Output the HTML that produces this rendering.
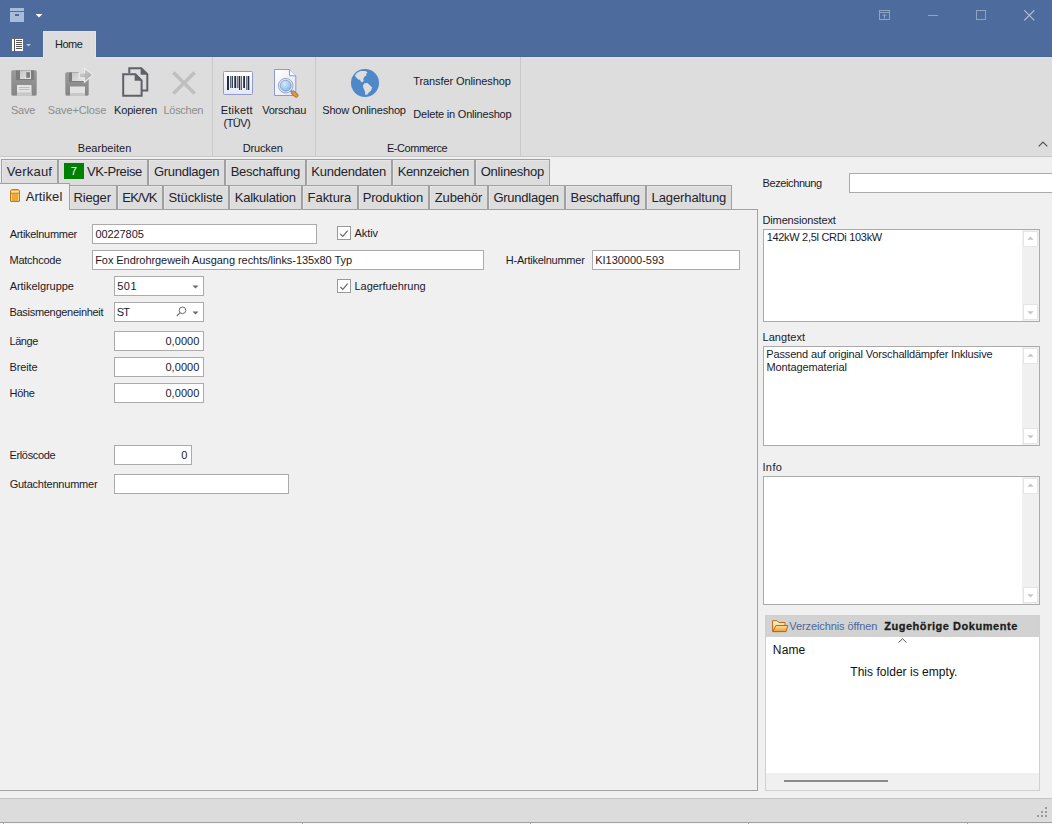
<!DOCTYPE html>
<html>
<head>
<meta charset="utf-8">
<title>Artikel</title>
<style>
*{box-sizing:border-box;margin:0;padding:0}
html,body{width:1052px;height:824px;overflow:hidden;background:#f0f0f0}
body{font-family:"Liberation Sans",sans-serif;font-size:11px;color:#1a1a2a;position:relative}
.abs{position:absolute}
.t{position:absolute;white-space:nowrap}
#title{left:0;top:0;width:1052px;height:57px;background:#4d6b9d;border-bottom:1px solid #47659a}
#hometab{left:43px;top:31px;width:53px;height:27px;background:#dddddd;border:1px solid #e4e4e2;border-bottom:none}
#ribbon{left:0;top:57px;width:1052px;height:99px;background:#dddddd;border-top:1px solid #e4e4e2}
#ribline{left:0;top:156px;width:1052px;height:1px;background:#c8c8c8}
.rsep{position:absolute;top:57px;width:1px;height:99px;background:#c9c9c9}
.tab{position:absolute;background:#dddddd;border:1px solid #a0a0a0;box-shadow:inset 1px 1px 0 #e6e6e6}
.r1{top:159px;height:26px;border-bottom:none}
.r2{top:185px;height:25px}
.in{position:absolute;background:#fff;border:1px solid #ababab;height:20px}
.cb{position:absolute;width:14px;height:14px;background:#fff;border:1px solid #a6a6a6}
.ta{position:absolute;background:#fff;border:1px solid #ababab}
.sb{position:absolute;top:0;right:0;bottom:0;width:17px;background:#f0f0f0}
.sbtn{position:absolute;left:1px;width:15px;height:16px;background:#fff;border:1px solid #e5e5e5}
</style>
</head>
<body>
<div id="title" class="abs"></div>
<div id="ribbon" class="abs"></div>
<div id="hometab" class="abs"></div>
<div id="ribline" class="abs"></div>
<svg class="abs" style="left:10px;top:8px" width="14" height="14" viewBox="0 0 14 14"><rect x="0" y="0" width="14" height="3" fill="#a8bbdc"/><rect x="0" y="4" width="14" height="10" fill="#a8bbdc"/><rect x="5" y="6" width="4" height="2" fill="#4d6b9d"/></svg>
<svg class="abs" style="left:35px;top:13px" width="8" height="5" viewBox="0 0 8 5"><path d="M0.6 1h6.8L4 4.4z" fill="#ffffff"/></svg>
<svg class="abs" style="left:11px;top:38px" width="14" height="14" viewBox="0 0 14 14"><rect x="0.5" y="0.5" width="12" height="13" fill="#fff" stroke="#6b6b6b" stroke-width="1"/><path d="M3.5 0.5v13" stroke="#555" stroke-width="1"/><path d="M5 2.5h6M5 4.5h6M5 6.5h6M5 8.5h6M5 10.5h6" stroke="#555" stroke-width="1"/></svg>
<svg class="abs" style="left:26px;top:44px" width="5" height="3" viewBox="0 0 5 3"><path d="M0 0h5L2.5 2.6z" fill="#b9c3d6"/></svg>
<div class="t" style="left:54.99px;top:38px;font-size:11px;line-height:13px;height:13px;color:#1a1a2a;letter-spacing:-0.498px;">Home</div><svg class="abs" style="left:879px;top:10px" width="11" height="10" viewBox="0 0 11 10"><rect x="0.5" y="0.5" width="10" height="9" fill="none" stroke="#8fa3c4"/><path d="M0 2.5h11" stroke="#8fa3c4"/><path d="M5.5 8.5v-4M3.5 6l2-2 2 2" stroke="#8fa3c4" fill="none"/></svg>
<div class="abs" style="left:928px;top:15px;width:10px;height:1px;background:#8fa3c4"></div>
<div class="abs" style="left:976px;top:10px;width:10px;height:10px;border:1px solid #8fa3c4"></div>
<svg class="abs" style="left:1024px;top:10px" width="11" height="11" viewBox="0 0 11 11"><path d="M0.3 0.3l10 10M10.3 0.3l-10 10" stroke="#b4c0d8" stroke-width="1.1"/></svg>
<div class="rsep" style="left:212px"></div>
<div class="rsep" style="left:315px"></div>
<div class="rsep" style="left:520px"></div>
<div class="t" style="left:10.93px;top:104px;font-size:11px;line-height:13px;height:13px;color:#8c8c8c;letter-spacing:-0.211px;">Save</div><div class="t" style="left:47.78px;top:104px;font-size:11px;line-height:13px;height:13px;color:#8c8c8c;letter-spacing:-0.112px;">Save+Close</div><div class="t" style="left:113.96px;top:104px;font-size:11px;line-height:13px;height:13px;color:#1a1a2a;letter-spacing:-0.136px;">Kopieren</div><div class="t" style="left:163.55px;top:104px;font-size:11px;line-height:13px;height:13px;color:#8c8c8c;letter-spacing:-0.304px;">Löschen</div><div class="t" style="left:220.74px;top:104px;font-size:11px;line-height:13px;height:13px;color:#1a1a2a;letter-spacing:0.218px;">Etikett</div><div class="t" style="left:223.55px;top:117px;font-size:11px;line-height:13px;height:13px;color:#1a1a2a;letter-spacing:-0.551px;">(TÜV)</div><div class="t" style="left:262.16px;top:104px;font-size:11px;line-height:13px;height:13px;color:#1a1a2a;letter-spacing:-0.237px;">Vorschau</div><div class="t" style="left:322.26px;top:104px;font-size:11px;line-height:13px;height:13px;color:#1a1a2a;letter-spacing:-0.178px;">Show Onlineshop</div><div class="t" style="left:413.16px;top:75px;font-size:11px;line-height:13px;height:13px;color:#1a1a2a;letter-spacing:-0.084px;">Transfer Onlineshop</div><div class="t" style="left:413.36px;top:108px;font-size:11px;line-height:13px;height:13px;color:#1a1a2a;letter-spacing:-0.203px;">Delete in Onlineshop</div><div class="t" style="left:77.80px;top:142px;font-size:11px;line-height:13px;height:13px;color:#1a1a2a;letter-spacing:0.039px;">Bearbeiten</div><div class="t" style="left:242.85px;top:142px;font-size:11px;line-height:13px;height:13px;color:#1a1a2a;letter-spacing:-0.176px;">Drucken</div><div class="t" style="left:386.95px;top:142px;font-size:11px;line-height:13px;height:13px;color:#1a1a2a;letter-spacing:-0.456px;">E-Commerce</div><svg class="abs" style="left:1038px;top:141px" width="10" height="6" viewBox="0 0 10 6"><path d="M0.7 5.3L5 1l4.3 4.3" fill="none" stroke="#505050" stroke-width="1.2"/></svg>
<svg class="abs" style="left:11px;top:70px" width="26" height="26" viewBox="0 0 26 26">
<defs><linearGradient id="fg" x1="0" y1="0" x2="0" y2="1"><stop offset="0" stop-color="#999999"/><stop offset="1" stop-color="#858585"/></linearGradient>
<linearGradient id="fl" x1="0" y1="0" x2="1" y2="1"><stop offset="0" stop-color="#c4c4c4"/><stop offset="1" stop-color="#e6e6e6"/></linearGradient></defs>
<rect x="0.5" y="0.5" width="25" height="25" rx="1.5" fill="url(#fg)" stroke="#a6a6a6"/>
<rect x="5" y="0.5" width="18" height="9.5" fill="#7c7c7c"/>
<rect x="9" y="0.5" width="11" height="8.5" fill="url(#fl)"/>
<rect x="15.3" y="2.2" width="3.6" height="5.6" fill="#7a7a7a"/>
<rect x="6" y="15" width="14.5" height="10.5" fill="#e3e3e3"/>
<rect x="6" y="22.3" width="14.5" height="3.2" fill="#c9c9c9"/>
<path d="M8 17.5h10.5M8 19.5h10.5" stroke="#bdbdbd" stroke-width="1"/>
</svg>
<svg class="abs" style="left:65px;top:67px" width="30" height="30" viewBox="0 0 30 30">
<defs><linearGradient id="ag" x1="0" y1="0" x2="1" y2="1"><stop offset="0" stop-color="#d2d2d2"/><stop offset="1" stop-color="#a2a2a2"/></linearGradient></defs>
<rect x="0.5" y="5.5" width="23" height="23" rx="1.5" fill="url(#fg)" stroke="#a6a6a6"/>
<rect x="4" y="5.5" width="17" height="9.5" fill="#7c7c7c"/>
<rect x="7" y="5.5" width="12" height="8.5" fill="url(#fl)"/>
<rect x="5" y="19.5" width="15" height="9" fill="#e3e3e3"/>
<rect x="5" y="26" width="15" height="2.5" fill="#c9c9c9"/>
<path d="M14.2 5.8h5.2V1.3L27.9 7.9l-8.5 7.4v-4.5h-5.2z" fill="url(#ag)" stroke="#ececec" stroke-width="1.2" stroke-linejoin="round"/>
</svg>
<svg class="abs" style="left:122px;top:67px" width="27" height="30" viewBox="0 0 27 30">
<path d="M7.3 6V1.2h12l6 6v16.4h-5.5" fill="none" stroke="#60606a" stroke-width="2"/>
<path d="M18.6 0.8l7 7h-7z" fill="#60606a"/>
<path d="M1.2 7.2h12.2l6.2 6.2v15.3H1.2z" fill="#dddddd" stroke="#60606a" stroke-width="2"/>
<path d="M12.7 6.6l7.1 7.1h-7.1z" fill="#60606a"/>
</svg>
<svg class="abs" style="left:171px;top:70px" width="26" height="26" viewBox="0 0 26 26"><path d="M2.4 2.4l21.2 21.2M23.6 2.4L2.4 23.6" stroke="#bfbfbf" stroke-width="3.5"/></svg>
<svg class="abs" style="left:223px;top:71px" width="30" height="24" viewBox="0 0 30 24">
<defs><linearGradient id="bg1" x1="0" y1="0" x2="0" y2="1"><stop offset="0" stop-color="#ffffff"/><stop offset="1" stop-color="#e4e8f4"/></linearGradient></defs>
<rect x="0.5" y="0.5" width="29" height="23" rx="1" fill="url(#bg1)" stroke="#8e9aca"/>
<g fill="#222c44"><rect x="4" y="5" width="2" height="14"/><rect x="7.3" y="5" width="1" height="12"/><rect x="8.9" y="5" width="1" height="12"/><rect x="11.3" y="5" width="1.9" height="12"/><rect x="14.4" y="5" width="1" height="12"/><rect x="16" y="5" width="1" height="14"/><rect x="17.7" y="5" width="1" height="14"/><rect x="20.2" y="5" width="1.8" height="12"/><rect x="23.4" y="5" width="1" height="14"/><rect x="25" y="5" width="1.3" height="14"/></g>
</svg>
<svg class="abs" style="left:274px;top:69px" width="25" height="29" viewBox="0 0 25 29">
<defs><linearGradient id="pg" x1="0" y1="0" x2="1" y2="1"><stop offset="0" stop-color="#ffffff"/><stop offset="1" stop-color="#dfe5f3"/></linearGradient>
<radialGradient id="lg" cx="0.4" cy="0.35" r="0.7"><stop offset="0" stop-color="#d3ecfb"/><stop offset="1" stop-color="#6fb3e6"/></radialGradient></defs>
<path d="M0.5 0.5h15l6.3 6.3V26.5H0.5z" fill="url(#pg)" stroke="#8e9aca"/>
<path d="M15.5 0.5v6.3h6.3" fill="#f4f6fb" stroke="#8e9aca"/>
<path d="M19.3 23.9l2.9 2.5" stroke="#a8691d" stroke-width="4.4" stroke-linecap="round"/>
<path d="M19.3 23.9l2.9 2.5" stroke="#dc9a3a" stroke-width="3" stroke-linecap="round"/>
<path d="M16.2 21.2l2.6 2.3" stroke="#8a8fa8" stroke-width="2.4"/>
<circle cx="11.7" cy="16.7" r="6.4" fill="url(#lg)" stroke="#e6e9f5" stroke-width="1.7"/>
<circle cx="11.7" cy="16.7" r="7.3" fill="none" stroke="#7a83b4" stroke-width="0.7"/>
<circle cx="11.7" cy="16.7" r="5.5" fill="none" stroke="#7a83b4" stroke-width="0.6"/>
</svg>
<svg class="abs" style="left:351px;top:69px" width="28" height="28" viewBox="0 0 28 28">
<circle cx="14" cy="14" r="14" fill="#4d89c8"/>
<path d="M3.8 6.8L6 3.7 9.5 2.1 14.3 1.9 16.6 3.2 15.2 4.7 15.6 6.3 13.5 7.6 12.3 9.8 12.7 11.8 11.5 13.3 9.7 12.6 9 10.6 7.5 10.8 6 9.3z" fill="#dddddd"/>
<path d="M13.5 14.3L16.4 14 18.9 16.2 21.2 18.5 19.9 21.7 17.9 23.6 16.4 25.6 14.3 26.1 14 22.7 12.3 18.7 12 16.2z" fill="#dddddd"/>
</svg>
<div class="abs" style="left:-1px;top:209px;width:759px;height:582px;border:1px solid #a3a3a3;background:#f0f0f0"></div>
<div class="tab r1" style="left:1px;width:57px"></div><div class="t" style="left:6.68px;top:164px;font-size:13px;line-height:15px;height:15px;color:#23232f;letter-spacing:0.197px;">Verkauf</div>
<div class="tab r1" style="left:58px;width:90px"></div><div class="t" style="left:86.97px;top:164px;font-size:13px;line-height:15px;height:15px;color:#23232f;letter-spacing:-0.403px;">VK-Preise</div>
<div class="tab r1" style="left:148px;width:77px"></div><div class="t" style="left:153.93px;top:164px;font-size:13px;line-height:15px;height:15px;color:#23232f;letter-spacing:-0.264px;">Grundlagen</div>
<div class="tab r1" style="left:225px;width:81px"></div><div class="t" style="left:230.66px;top:164px;font-size:13px;line-height:15px;height:15px;color:#23232f;letter-spacing:-0.259px;">Beschaffung</div>
<div class="tab r1" style="left:306px;width:86px"></div><div class="t" style="left:311.33px;top:164px;font-size:13px;line-height:15px;height:15px;color:#23232f;letter-spacing:-0.253px;">Kundendaten</div>
<div class="tab r1" style="left:392px;width:83px"></div><div class="t" style="left:397.63px;top:164px;font-size:13px;line-height:15px;height:15px;color:#23232f;letter-spacing:-0.361px;">Kennzeichen</div>
<div class="tab r1" style="left:475px;width:75px"></div><div class="t" style="left:480.72px;top:164px;font-size:13px;line-height:15px;height:15px;color:#23232f;letter-spacing:-0.239px;">Onlineshop</div>
<div class="abs" style="left:64px;top:163px;width:20px;height:16px;background:#008000"></div><div class="t" style="left:70.70px;top:165px;font-size:11px;line-height:13px;height:13px;color:#ffffff;">7</div>
<div class="tab r2" style="left:69px;width:48px"></div><div class="t" style="left:73.57px;top:190px;font-size:13px;line-height:15px;height:15px;color:#23232f;letter-spacing:-0.173px;">Rieger</div>
<div class="tab r2" style="left:117px;width:46px"></div><div class="t" style="left:122.36px;top:190px;font-size:13px;line-height:15px;height:15px;color:#23232f;letter-spacing:-0.800px;">EK/VK</div>
<div class="tab r2" style="left:163px;width:66px"></div><div class="t" style="left:168.49px;top:190px;font-size:13px;line-height:15px;height:15px;color:#23232f;letter-spacing:-0.122px;">Stückliste</div>
<div class="tab r2" style="left:229px;width:73px"></div><div class="t" style="left:234.76px;top:190px;font-size:13px;line-height:15px;height:15px;color:#23232f;letter-spacing:-0.234px;">Kalkulation</div>
<div class="tab r2" style="left:302px;width:56px"></div><div class="t" style="left:307.59px;top:190px;font-size:13px;line-height:15px;height:15px;color:#23232f;letter-spacing:-0.055px;">Faktura</div>
<div class="tab r2" style="left:358px;width:71px"></div><div class="t" style="left:362.70px;top:190px;font-size:13px;line-height:15px;height:15px;color:#23232f;letter-spacing:-0.192px;">Produktion</div>
<div class="tab r2" style="left:429px;width:59px"></div><div class="t" style="left:434.78px;top:190px;font-size:13px;line-height:15px;height:15px;color:#23232f;letter-spacing:-0.137px;">Zubehör</div>
<div class="tab r2" style="left:488px;width:77px"></div><div class="t" style="left:493.41px;top:190px;font-size:13px;line-height:15px;height:15px;color:#23232f;letter-spacing:-0.251px;">Grundlagen</div>
<div class="tab r2" style="left:565px;width:81px"></div><div class="t" style="left:570.52px;top:190px;font-size:13px;line-height:15px;height:15px;color:#23232f;letter-spacing:-0.247px;">Beschaffung</div>
<div class="tab r2" style="left:646px;width:86px"></div><div class="t" style="left:651.55px;top:190px;font-size:13px;line-height:15px;height:15px;color:#23232f;letter-spacing:-0.100px;">Lagerhaltung</div>
<div class="abs" style="left:-1px;top:183px;width:71px;height:27px;background:#f0f0f0;border:1px solid #a0a0a0;border-bottom:none"></div><svg class="abs" style="left:10px;top:189px" width="10" height="13" viewBox="0 0 10 13"><path d="M1.7 0.5h6.6l1.2 1.4v10.1q0 .5-.5.5H1q-.5 0-.5-.5V1.9z" fill="#eba83c" stroke="#bf781c"/><rect x="1.1" y="2.1" width="7.8" height="1.5" fill="#fff2ac"/><path d="M1 1.4h8" stroke="#eeb14a" stroke-width="1"/><path d="M0.9 4.3h8.2" stroke="#c98322" stroke-width="0.8"/><path d="M1.5 5v6.6M8.5 5v6.6" stroke="#f8d680" stroke-width="0.9"/></svg><div class="t" style="left:25.73px;top:189px;font-size:13px;line-height:15px;height:15px;color:#23232f;letter-spacing:0.072px;">Artikel</div>
<div class="in" style="left:92px;top:224px;width:225px;height:20px"></div><div class="t" style="left:9.68px;top:228px;font-size:11px;line-height:13px;height:13px;color:#1a1a2a;letter-spacing:-0.283px;">Artikelnummer</div><div class="t" style="left:95.39px;top:228px;font-size:11px;line-height:13px;height:13px;color:#1a1a2a;letter-spacing:-0.073px;">00227805</div>
<div class="in" style="left:92px;top:250px;width:392px;height:20px"></div><div class="t" style="left:9.48px;top:254px;font-size:11px;line-height:13px;height:13px;color:#1a1a2a;letter-spacing:-0.249px;">Matchcode</div><div class="t" style="left:95.19px;top:254px;font-size:11px;line-height:13px;height:13px;color:#1a1a2a;letter-spacing:-0.059px;">Fox Endrohrgeweih Ausgang rechts/links-135x80 Typ</div>
<div class="in" style="left:114px;top:276px;width:90px;height:20px"></div><div class="t" style="left:9.68px;top:280px;font-size:11px;line-height:13px;height:13px;color:#1a1a2a;letter-spacing:-0.045px;">Artikelgruppe</div><div class="t" style="left:117.34px;top:280px;font-size:11px;line-height:13px;height:13px;color:#1a1a2a;letter-spacing:0.410px;">501</div>
<div class="in" style="left:114px;top:302px;width:90px;height:20px"></div><div class="t" style="left:9.49px;top:306px;font-size:11px;line-height:13px;height:13px;color:#1a1a2a;letter-spacing:-0.293px;">Basismengeneinheit</div><div class="t" style="left:116.81px;top:306px;font-size:11px;line-height:13px;height:13px;color:#1a1a2a;letter-spacing:-0.800px;">ST</div>
<svg class="abs" style="left:192px;top:285px" width="7" height="4" viewBox="0 0 7 4"><path d="M0.5 0.5h6L3.5 3.5z" fill="#6a6a6a"/></svg><svg class="abs" style="left:192px;top:311px" width="7" height="4" viewBox="0 0 7 4"><path d="M0.5 0.5h6L3.5 3.5z" fill="#6a6a6a"/></svg><svg class="abs" style="left:176px;top:306px" width="11" height="11" viewBox="0 0 11 11"><circle cx="6.5" cy="4.3" r="3.3" fill="none" stroke="#6f6f6f" stroke-width="1"/><path d="M4.2 6.6L0.8 10" stroke="#6f6f6f" stroke-width="1.2"/></svg>
<div class="in" style="left:114px;top:331px;width:90px;height:20px"></div><div class="t" style="left:9.50px;top:335px;font-size:11px;line-height:13px;height:13px;color:#1a1a2a;letter-spacing:-0.451px;">Länge</div><div class="t" style="left:165.38px;top:335px;font-size:11px;line-height:13px;height:13px;color:#1a1a2a;letter-spacing:0.080px;">0,0000</div>
<div class="in" style="left:114px;top:357px;width:90px;height:20px"></div><div class="t" style="left:9.49px;top:361px;font-size:11px;line-height:13px;height:13px;color:#1a1a2a;letter-spacing:-0.108px;">Breite</div><div class="t" style="left:165.38px;top:361px;font-size:11px;line-height:13px;height:13px;color:#1a1a2a;letter-spacing:0.080px;">0,0000</div>
<div class="in" style="left:114px;top:383px;width:90px;height:20px"></div><div class="t" style="left:9.48px;top:387px;font-size:11px;line-height:13px;height:13px;color:#1a1a2a;letter-spacing:-0.285px;">Höhe</div><div class="t" style="left:165.38px;top:387px;font-size:11px;line-height:13px;height:13px;color:#1a1a2a;letter-spacing:0.080px;">0,0000</div>
<div class="in" style="left:114px;top:445px;width:78px;height:20px"></div><div class="t" style="left:9.49px;top:449px;font-size:11px;line-height:13px;height:13px;color:#1a1a2a;letter-spacing:-0.355px;">Erlöscode</div><div class="t" style="left:181.18px;top:449px;font-size:11px;line-height:13px;height:13px;color:#1a1a2a;">0</div>
<div class="in" style="left:114px;top:474px;width:175px;height:20px"></div><div class="t" style="left:9.65px;top:478px;font-size:11px;line-height:13px;height:13px;color:#1a1a2a;letter-spacing:-0.227px;">Gutachtennummer</div>
<svg class="abs" style="left:337px;top:226px" width="14" height="14" viewBox="0 0 14 14"><rect x="0.5" y="0.5" width="13" height="13" fill="#fff" stroke="#999999"/><path d="M3.3 7.9l2.5 2.5L10.7 4.6" fill="none" stroke="#6c6c6c" stroke-width="1.3"/></svg><div class="t" style="left:354.53px;top:227px;font-size:11px;line-height:13px;height:13px;color:#1a1a2a;letter-spacing:-0.063px;">Aktiv</div>
<svg class="abs" style="left:337px;top:279px" width="14" height="14" viewBox="0 0 14 14"><rect x="0.5" y="0.5" width="13" height="13" fill="#fff" stroke="#999999"/><path d="M3.3 7.9l2.5 2.5L10.7 4.6" fill="none" stroke="#6c6c6c" stroke-width="1.3"/></svg><div class="t" style="left:354.50px;top:280px;font-size:11px;line-height:13px;height:13px;color:#1a1a2a;letter-spacing:-0.035px;">Lagerfuehrung</div>
<div class="in" style="left:592px;top:250px;width:148px;height:20px"></div><div class="t" style="left:505.83px;top:254px;font-size:11px;line-height:13px;height:13px;color:#1a1a2a;letter-spacing:-0.253px;">H-Artikelnummer</div><div class="t" style="left:595.15px;top:254px;font-size:11px;line-height:13px;height:13px;color:#1a1a2a;letter-spacing:-0.004px;">KI130000-593</div>
<div class="in" style="left:849px;top:173px;width:210px;height:20px"></div><div class="t" style="left:762.49px;top:177px;font-size:11px;line-height:13px;height:13px;color:#1a1a2a;letter-spacing:-0.391px;">Bezeichnung</div>
<div class="t" style="left:762.50px;top:214px;font-size:11px;line-height:13px;height:13px;color:#1a1a2a;letter-spacing:-0.140px;">Dimensionstext</div><div class="ta" style="left:763px;top:229px;width:277px;height:93px"><div class="sb"><div class="sbtn" style="top:1px"></div><div class="sbtn" style="bottom:1px"></div></div></div><svg class="abs" style="left:1027px;top:236px" width="7" height="4" viewBox="0 0 7 4"><path d="M0.3 3.7L3.5 0.4l3.2 3.3z" fill="#c6c6c6"/></svg><svg class="abs" style="left:1027px;top:311px" width="7" height="4" viewBox="0 0 7 4"><path d="M0.3 0.3L3.5 3.6l3.2-3.3z" fill="#c6c6c6"/></svg>
<div class="t" style="left:766.63px;top:231px;font-size:11px;line-height:13px;height:13px;color:#1a1a2a;letter-spacing:-0.301px;">142kW 2,5l CRDi 103kW</div>
<div class="t" style="left:762.50px;top:331px;font-size:11px;line-height:13px;height:13px;color:#1a1a2a;letter-spacing:0.045px;">Langtext</div><div class="ta" style="left:763px;top:346px;width:277px;height:100px"><div class="sb"><div class="sbtn" style="top:1px"></div><div class="sbtn" style="bottom:1px"></div></div></div><svg class="abs" style="left:1027px;top:353px" width="7" height="4" viewBox="0 0 7 4"><path d="M0.3 3.7L3.5 0.4l3.2 3.3z" fill="#c6c6c6"/></svg><svg class="abs" style="left:1027px;top:435px" width="7" height="4" viewBox="0 0 7 4"><path d="M0.3 0.3L3.5 3.6l3.2-3.3z" fill="#c6c6c6"/></svg>
<div class="t" style="left:766.34px;top:348px;font-size:11px;line-height:13px;height:13px;color:#1a1a2a;letter-spacing:-0.159px;">Passend auf original Vorschalldämpfer Inklusive</div><div class="t" style="left:766.39px;top:361px;font-size:11px;line-height:13px;height:13px;color:#1a1a2a;letter-spacing:-0.099px;">Montagematerial</div>
<div class="t" style="left:762.38px;top:461px;font-size:11px;line-height:13px;height:13px;color:#1a1a2a;letter-spacing:0.417px;">Info</div><div class="ta" style="left:763px;top:476px;width:277px;height:129px"><div class="sb"><div class="sbtn" style="top:1px"></div><div class="sbtn" style="bottom:1px"></div></div></div><svg class="abs" style="left:1027px;top:483px" width="7" height="4" viewBox="0 0 7 4"><path d="M0.3 3.7L3.5 0.4l3.2 3.3z" fill="#c6c6c6"/></svg><svg class="abs" style="left:1027px;top:594px" width="7" height="4" viewBox="0 0 7 4"><path d="M0.3 0.3L3.5 3.6l3.2-3.3z" fill="#c6c6c6"/></svg>

<div class="abs" style="left:765px;top:615px;width:275px;height:176px;background:#f0f0f0;border:1px solid #d0d0d0"></div><div class="abs" style="left:766px;top:616px;width:273px;height:21px;background:#d2d2d2"></div><div class="abs" style="left:766px;top:637px;width:273px;height:136px;background:#ffffff"></div><div class="abs" style="left:784px;top:780px;width:104px;height:2px;background:#8a8a8a"></div>
<svg class="abs" style="left:772px;top:620px" width="17" height="13" viewBox="0 0 17 13"><defs><linearGradient id="fb" x1="0" y1="0" x2="0" y2="1"><stop offset="0" stop-color="#fff6cf"/><stop offset="1" stop-color="#f2c060"/></linearGradient><linearGradient id="ff" x1="0" y1="0" x2="0" y2="1"><stop offset="0" stop-color="#fbe0a0"/><stop offset="1" stop-color="#e89c32"/></linearGradient></defs><path d="M0.6 11.6V0.7h4.6l1.6 1.8h6.2v9z" fill="url(#fb)" stroke="#b9681c"/><path d="M3.9 5.5h12l-1.9 6.1H0.9z" fill="url(#ff)" stroke="#b9681c"/></svg>
<div class="t" style="left:789.27px;top:620px;font-size:11px;line-height:13px;height:13px;color:#4b689c;letter-spacing:-0.090px;">Verzeichnis öffnen</div><div class="t" style="left:884.16px;top:620px;font-size:11px;line-height:13px;height:13px;color:#1c1c1c;font-weight:bold;-webkit-text-stroke:0.3px #1c1c1c;letter-spacing:0.544px;">Zugehörige Dokumente</div><div class="t" style="left:772.85px;top:643px;font-size:12px;line-height:14px;height:14px;color:#111;letter-spacing:0.116px;">Name</div><div class="t" style="left:850.27px;top:665px;font-size:12px;line-height:14px;height:14px;color:#111;letter-spacing:0.031px;">This folder is empty.</div><svg class="abs" style="left:898px;top:638px" width="9" height="5" viewBox="0 0 9 5"><path d="M0.5 4.5L4.5 0.8l4 3.7" fill="none" stroke="#555" stroke-width="1"/></svg>
<div class="abs" style="left:0;top:798px;width:1052px;height:1px;background:#c2c2c2"></div>
<div class="abs" style="left:0;top:799px;width:1052px;height:23px;background:#dcdcdc"></div>
<div class="abs" style="left:0;top:822px;width:1052px;height:1px;background:#a0a0a0"></div>
<div class="abs" style="left:0;top:823px;width:1052px;height:1px;background:#f8f8f8"></div>
<div class="abs" style="left:3px;top:823px;width:1px;height:1px;background:#a8a8a8"></div>
<div class="abs" style="left:302px;top:823px;width:1px;height:1px;background:#a8a8a8"></div>
<div class="abs" style="left:530px;top:823px;width:1px;height:1px;background:#a8a8a8"></div>
<div class="abs" style="left:748px;top:823px;width:1px;height:1px;background:#a8a8a8"></div>
<div class="abs" style="left:967px;top:823px;width:1px;height:1px;background:#a8a8a8"></div>
<svg class="abs" style="left:1037px;top:807px" width="10" height="10" viewBox="0 0 10 10"><g fill="#9a9a9a"><rect x="8" y="0" width="2" height="2"/><rect x="4" y="4" width="2" height="2"/><rect x="8" y="4" width="2" height="2"/><rect x="0" y="8" width="2" height="2"/><rect x="4" y="8" width="2" height="2"/><rect x="8" y="8" width="2" height="2"/></g></svg>
</body>
</html>
